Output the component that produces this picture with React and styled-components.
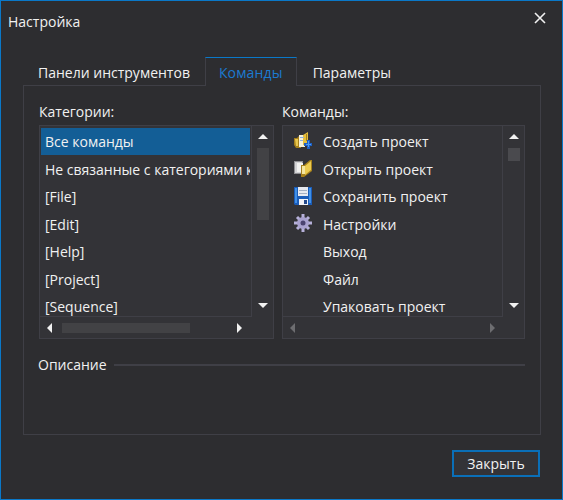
import React from 'react';
import styled, { createGlobalStyle } from 'styled-components';

const Global = createGlobalStyle`
  html, body { margin: 0; padding: 0; background: #2d2d30; }
  * { box-sizing: border-box; }
`;

const Window = styled.div`
  width: 563px;
  height: 500px;
  display: flex;
  flex-direction: column;
  background: #2d2d30;
  border: 1px solid #0a78c8;
  color: #f1f1f1;
  font-family: "Open Sans", "Noto Sans", sans-serif;
  font-size: 14px;
  overflow: hidden;
`;

const TitleBar = styled.div`
  height: 56px;
  flex: none;
  display: flex;
  justify-content: space-between;
  padding: 11px 16px 0 7px;
`;

const Title = styled.div`
  line-height: 20px;
`;

const CloseButton = styled.div`
  height: 12px;
  line-height: 0;
`;

const Tabs = styled.div`
  display: flex;
  height: 28px;
  flex: none;
  padding-left: 22px;
  position: relative;
  z-index: 1;
`;

const Tab = styled.div`
  padding: 0 ${p => p.$pad}px;
  line-height: 29px;
  height: ${p => (p.$active ? 29 : 28)}px;
  color: ${p => (p.$active ? '#1c7ad0' : '#f1f1f1')};
  letter-spacing: ${p => (p.$active ? 0.15 : 0)}px;
  background: #2d2d30;
  border-top: 1px solid ${p => (p.$active ? '#0a78c8' : 'transparent')};
  border-left: 1px solid ${p => (p.$active ? '#3f3f46' : 'transparent')};
  border-right: 1px solid ${p => (p.$active ? '#3f3f46' : 'transparent')};
`;

const Panel = styled.div`
  width: 518px;
  height: 350px;
  margin-left: 22px;
  flex: none;
  border: 1px solid #3f3f46;
  padding: 16px 15px 0 15px;
`;

const Columns = styled.div`
  display: flex;
  gap: 8px;
`;

const Column = styled.div`
  display: flex;
  flex-direction: column;
`;

const Label = styled.div`
  line-height: 20px;
  height: 23px;
`;

const ListFrame = styled.div`
  width: ${p => p.$width}px;
  height: 214px;
  display: grid;
  grid-template-columns: 1fr 21px;
  grid-template-rows: 1fr 21px;
  background: #333337;
  border: 1px solid #3f3f46;
`;

const List = styled.div`
  padding: 1.5px 1px 0;
  border-right: 1px solid #3f3f46;
  border-bottom: 1px solid #3f3f46;
  overflow: hidden;
`;

const Row = styled.div`
  height: 27.5px;
  display: flex;
  align-items: center;
  padding: 1px 0 0 ${p => (p.$icons ? 10 : 4)}px;
  white-space: nowrap;
  overflow: hidden;
  background: ${p => (p.$selected ? '#135e96' : 'transparent')};
`;

const IconSlot = styled.span`
  width: 29px;
  height: 20px;
  flex: none;
  display: flex;
  align-items: center;
`;

const VBar = styled.div`
  display: flex;
  flex-direction: column;
  align-items: center;
  padding-top: 8px;
`;

const HBar = styled.div`
  display: flex;
  align-items: center;
  padding: 0 ${p => p.$pad}px 0 7px;
`;

const Corner = styled.div``;

const Spacer = styled.div`
  flex: 1;
`;

const VThumb = styled.div`
  width: 12px;
  height: ${p => p.$size}px;
  margin-top: 9px;
  background: ${p => p.$color};
`;

const HThumb = styled.div`
  height: 10px;
  width: ${p => p.$size}px;
  margin-left: 10px;
  background: #424245;
`;

const ArrowUp = styled.div`
  width: 0; height: 0;
  border-left: 5px solid transparent;
  border-right: 5px solid transparent;
  border-bottom: 5px solid #f1f1f1;
`;

const ArrowDown = styled.div`
  width: 0; height: 0;
  margin-bottom: 9px;
  border-left: 5px solid transparent;
  border-right: 5px solid transparent;
  border-top: 5px solid #f1f1f1;
`;

const ArrowLeft = styled.div`
  width: 0; height: 0;
  border-top: 5px solid transparent;
  border-bottom: 5px solid transparent;
  border-right: 5px solid ${p => p.$color};
`;

const ArrowRight = styled.div`
  width: 0; height: 0;
  border-top: 5px solid transparent;
  border-bottom: 5px solid transparent;
  border-left: 5px solid ${p => p.$color};
`;

const Description = styled.div`
  display: flex;
  align-items: center;
  gap: 7px;
  margin: 15px 0 0 -1px;
  height: 20px;
`;

const Rule = styled.div`
  flex: 1;
  height: 2px;
  margin-top: 1px;
  background: #3f3f46;
`;

const Footer = styled.div`
  display: flex;
  justify-content: flex-end;
  padding: 15px 22px 0 0;
`;

const Button = styled.div`
  width: 88px;
  height: 27px;
  border: 2px solid #0a6fb8;
  background: #333337;
  display: flex;
  align-items: center;
  justify-content: center;
`;

const NewIcon = () => (
  <svg width="20" height="20" viewBox="0 0 20 20">
    <path d="M0 6h3l2-2h2v12H2L0 13z" fill="#a5801c" />
    <path d="M1 7h3v7H2z" fill="#e8c64e" />
    <path d="M5 3h6v12H5z" fill="#f6f1d8" />
    <path d="M9 3l5-3v10l-3 3H9z" fill="#e6bf3c" />
    <path d="M12 2h1v7h-1z" fill="#a5801c" />
    <path d="M6 5h4v1H6zM6 8h3v1H6z" fill="#8fb0dc" />
    <path d="M13 8h3v3h2v3h-2v3h-3v-3h-3v-3h3z" fill="#1c5fc4" />
    <path d="M14 9h1v3h2v1h-2v2h-1v-2h-2v-1h2z" fill="#4f9bf0" />
  </svg>
);

const OpenIcon = () => (
  <svg width="20" height="20" viewBox="0 0 20 20">
    <path d="M0 2h9v13H0z" fill="#8f8f92" />
    <path d="M1 3h7v11H1z" fill="#d4d4d6" />
    <path d="M3 4h6v9H3z" fill="#f2f2f0" />
    <path d="M7 6h3l6-5h2v11l-8 6H7z" fill="#a5801c" />
    <path d="M8 7h3v8H8z" fill="#f4e6a0" />
    <path d="M11 7l6-5v9l-6 5z" fill="#eccb50" />
  </svg>
);

const SaveIcon = () => (
  <svg width="20" height="20" viewBox="0 0 20 20">
    <path d="M0 0h18v18H1l-1-1z" fill="#1a5cb8" />
    <path d="M1 1h2v15H1zM15 1h2v15h-2z" fill="#3f8fe6" />
    <path d="M4 0h10v9H4z" fill="#e6e9f0" />
    <path d="M5 3h8v1H5zM5 6h8v1H5z" fill="#a4b0c4" />
    <path d="M5 12h9v6H5z" fill="#f1f3f7" />
    <path d="M10 13h3v4h-3z" fill="#24498a" />
  </svg>
);

const GearIcon = () => (
  <svg width="20" height="20" viewBox="0 0 20 20">
    <g stroke="#b7b1da" strokeWidth="3">
      <path d="M9 0v18" />
      <path d="M0 9h18" />
      <path d="M3 3l12 12" />
      <path d="M15 3L3 15" />
    </g>
    <circle cx="9" cy="9" r="6" fill="#a9a2cf" />
    <circle cx="9" cy="9" r="2.500" fill="#4a4370" />
  </svg>
);

const categories = ['Все команды', 'Не связанные с категориями команды', '[File]', '[Edit]', '[Help]', '[Project]', '[Sequence]'];

const commands = [
  { name: 'Создать проект', icon: <NewIcon /> },
  { name: 'Открыть проект', icon: <OpenIcon /> },
  { name: 'Сохранить проект', icon: <SaveIcon /> },
  { name: 'Настройки', icon: <GearIcon /> },
  { name: 'Выход' },
  { name: 'Файл' },
  { name: 'Упаковать проект' },
];

export default function App() {
  return (
    <>
      <Global />
      <Window>
        <TitleBar>
          <Title>Настройка</Title>
          <CloseButton>
            <svg width="12" height="12" viewBox="0 0 12 12">
              <path d="M1 1l10 10M11 1L1 11" stroke="#f1f1f1" strokeWidth="1.600" />
            </svg>
          </CloseButton>
        </TitleBar>
        <Tabs>
          <Tab $pad={14}>Панели инструментов</Tab>
          <Tab $pad={13} $active>Команды</Tab>
          <Tab $pad={15}>Параметры</Tab>
        </Tabs>
        <Panel>
          <Columns>
            <Column>
              <Label>Категории:</Label>
              <ListFrame $width={235}>
                <List>
                  {categories.map((c, i) => (
                    <Row key={c} $selected={i === 0}>{c}</Row>
                  ))}
                </List>
                <VBar>
                  <ArrowUp />
                  <VThumb $size={72} $color="#424245" />
                  <Spacer />
                  <ArrowDown />
                </VBar>
                <HBar $pad={10}>
                  <ArrowLeft $color="#f1f1f1" />
                  <HThumb $size={128} />
                  <Spacer />
                  <ArrowRight $color="#f1f1f1" />
                </HBar>
                <Corner />
              </ListFrame>
            </Column>
            <Column>
              <Label>Команды:</Label>
              <ListFrame $width={243}>
                <List>
                  {commands.map(c => (
                    <Row key={c.name} $icons>
                      <IconSlot>{c.icon}</IconSlot>
                      {c.name}
                    </Row>
                  ))}
                </List>
                <VBar>
                  <ArrowUp />
                  <VThumb $size={13} $color="#4a4a4e" />
                  <Spacer />
                  <ArrowDown />
                </VBar>
                <HBar $pad={8}>
                  <ArrowLeft $color="#6d6d70" />
                  <Spacer />
                  <ArrowRight $color="#6d6d70" />
                </HBar>
                <Corner />
              </ListFrame>
            </Column>
          </Columns>
          <Description>
            Описание
            <Rule />
          </Description>
        </Panel>
        <Footer>
          <Button>Закрыть</Button>
        </Footer>
      </Window>
    </>
  );
}
